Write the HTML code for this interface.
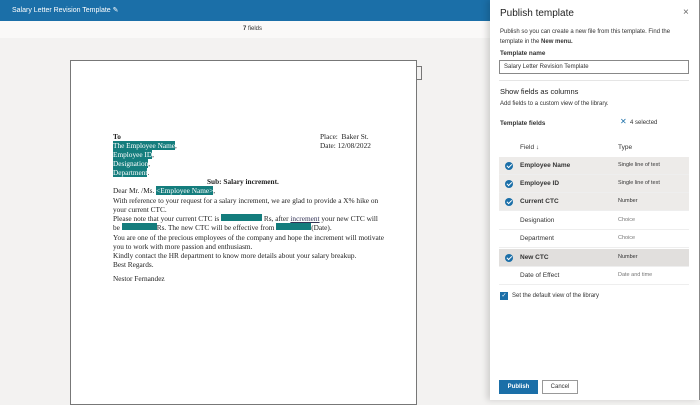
<!DOCTYPE html><html><head><style>
*{margin:0;padding:0;box-sizing:border-box}
body{width:700px;height:400px;overflow:hidden;position:relative;background:#f3f2f1;font-family:"Liberation Sans",sans-serif}
.a{position:absolute;white-space:nowrap}
.hdr{left:0;top:0;width:700px;height:21px;background:#1b6fa8}
.tb{left:0;top:21px;width:700px;height:17px;background:#faf9f8}
.pg{left:70px;top:60px;width:347px;height:345px;background:#fff;border:1px solid #777}
.l{font-family:"Liberation Serif",serif;font-size:7.3px;color:#222;position:absolute;white-space:nowrap}
.h{background:#147d7d;color:#fff}
.p{left:490px;top:0;width:210px;height:400px;background:#fff;box-shadow:-3px 0 6px rgba(0,0,0,.15);border-right:1px solid #888}
.s{font-size:6px;color:#333}
.row{position:absolute;left:499px;width:190px;height:18px;border-bottom:1px solid #eee;font-size:6.5px;color:#333}
.row.g{background:#edebe9}
.row span{position:absolute;top:5px}
.ck{position:absolute;left:6px;top:5px;width:8px;height:8px;border-radius:50%;background:#1b6fa8}
.ck:after{content:"";position:absolute;left:2.5px;top:1.3px;width:2px;height:3.5px;border:solid #fff;border-width:0 1px 1px 0;transform:rotate(45deg)}
</style></head><body>
<div class="a hdr"></div>
<div class="a" style="left:12px;top:6px;font-size:7px;color:#fff">Salary Letter Revision Template ✎</div>
<div class="a tb"></div>
<div class="a" style="left:243px;top:26px;font-size:6px;color:#333"><b>7</b> fields</div>
<div class="a pg"></div>
<div class="a" style="left:416px;top:66px;width:6px;height:14px;border:1px solid #777;border-left:none"></div>
<div class="l" style="left:113px;top:132px"><b>To</b></div>
<div class="l" style="left:320px;top:132px">Place:&nbsp; Baker St.</div>
<div class="l" style="left:320px;top:141px">Date: 12/08/2022</div>
<div class="l" style="left:113px;top:141px"><span class="h">The Employee Name</span>,</div>
<div class="l" style="left:113px;top:150px"><span class="h">Employee ID</span>,</div>
<div class="l" style="left:113px;top:159px"><span class="h">Designation</span>,</div>
<div class="l" style="left:113px;top:168px"><span class="h">Department</span>.</div>
<div class="l" style="left:207px;top:177px"><b>Sub: Salary increment.</b></div>
<div class="l" style="left:113px;top:186px">Dear Mr. /Ms. <span class="h">&lt;Employee Name&gt;</span>,</div>
<div class="l" style="left:113px;top:196px">With reference to your request for a salary increment, we are glad to provide a X% hike on</div>
<div class="l" style="left:113px;top:205px">your current CTC.</div>
<div class="l" style="left:113px;top:214px">Please note that your current CTC is <span class="h" style="display:inline-block;width:41px;height:7px"></span> Rs, after <u style="color:#335">increment</u> your new CTC will</div>
<div class="l" style="left:113px;top:223px">be <span class="h" style="display:inline-block;width:35px;height:7px"></span>Rs. The new CTC will be effective from <span class="h" style="display:inline-block;width:35px;height:7px"></span>(Date).</div>
<div class="l" style="left:113px;top:233px">You are one of the precious employees of the company and hope the increment will motivate</div>
<div class="l" style="left:113px;top:242px">you to work with more passion and enthusiasm.</div>
<div class="l" style="left:113px;top:251px">Kindly contact the HR department to know more details about your salary breakup.</div>
<div class="l" style="left:113px;top:260px">Best Regards.</div>
<div class="l" style="left:113px;top:274px">Nestor Fernandez</div>
<div class="a p"></div>
<div class="a" style="left:500px;top:8px;font-size:10px;color:#222">Publish template</div>
<div class="a" style="left:683px;top:7px;font-size:10px;color:#666">×</div>
<div class="a s" style="left:500px;top:27px;line-height:10px">Publish so you can create a new file from this template. Find the<br>template in the <b>New menu.</b></div>
<div class="a" style="left:500px;top:50px;font-size:6.3px;font-weight:bold;color:#333">Template name</div>
<div class="a" style="left:499px;top:60px;width:190px;height:14px;border:1px solid #888;font-size:6px;color:#333;padding:3px 4px">Salary Letter Revision Template</div>
<div class="a" style="left:499px;top:80px;width:190px;height:1px;background:#e5e5e5"></div>
<div class="a" style="left:500px;top:87px;font-size:7.5px;color:#222">Show fields as columns</div>
<div class="a s" style="left:500px;top:101px">Add fields to a custom view of the library.</div>
<div class="a" style="left:500px;top:120px;font-size:6.3px;font-weight:bold;color:#333">Template fields</div>
<div class="a s" style="left:620px;top:117px"><span style="color:#1b6fa8;font-size:8px">✕</span>&nbsp; 4 selected</div>
<div class="row" style="top:139px;border:none"><span style="left:21px">Field ↓</span><span style="left:119px">Type</span></div>
<div class="row g" style="top:157px"><i class="ck"></i><span style="left:21px;font-weight:bold">Employee Name</span><span style="left:119px;font-size:5.5px">Single line of text</span></div>
<div class="row g" style="top:175px"><i class="ck"></i><span style="left:21px;font-weight:bold">Employee ID</span><span style="left:119px;font-size:5.5px">Single line of text</span></div>
<div class="row g" style="top:193px"><i class="ck"></i><span style="left:21px;font-weight:bold">Current CTC</span><span style="left:119px;font-size:5.5px">Number</span></div>
<div class="row" style="top:212px"><span style="left:21px">Designation</span><span style="left:119px;font-size:5.5px;color:#777">Choice</span></div>
<div class="row" style="top:230px"><span style="left:21px">Department</span><span style="left:119px;font-size:5.5px;color:#777">Choice</span></div>
<div class="row g" style="top:249px;background:#e1dfdd"><i class="ck"></i><span style="left:21px;font-weight:bold">New CTC</span><span style="left:119px;font-size:5.5px">Number</span></div>
<div class="row" style="top:267px"><span style="left:21px">Date of Effect</span><span style="left:119px;font-size:5.5px;color:#777">Date and time</span></div>
<div class="a" style="left:500px;top:292px;width:8px;height:8px;background:#1b6fa8;color:#fff;font-size:6px;text-align:center;line-height:8px">✓</div>
<div class="a s" style="left:512px;top:293px">Set the default view of the library</div>
<div class="a" style="left:499px;top:380px;width:39px;height:14px;background:#1b6fa8;color:#fff;font-size:6px;font-weight:bold;text-align:center;line-height:14px">Publish</div>
<div class="a" style="left:542px;top:380px;width:36px;height:14px;border:1px solid #999;color:#333;font-size:6px;text-align:center;line-height:12px;background:#fff">Cancel</div>
</body></html>
